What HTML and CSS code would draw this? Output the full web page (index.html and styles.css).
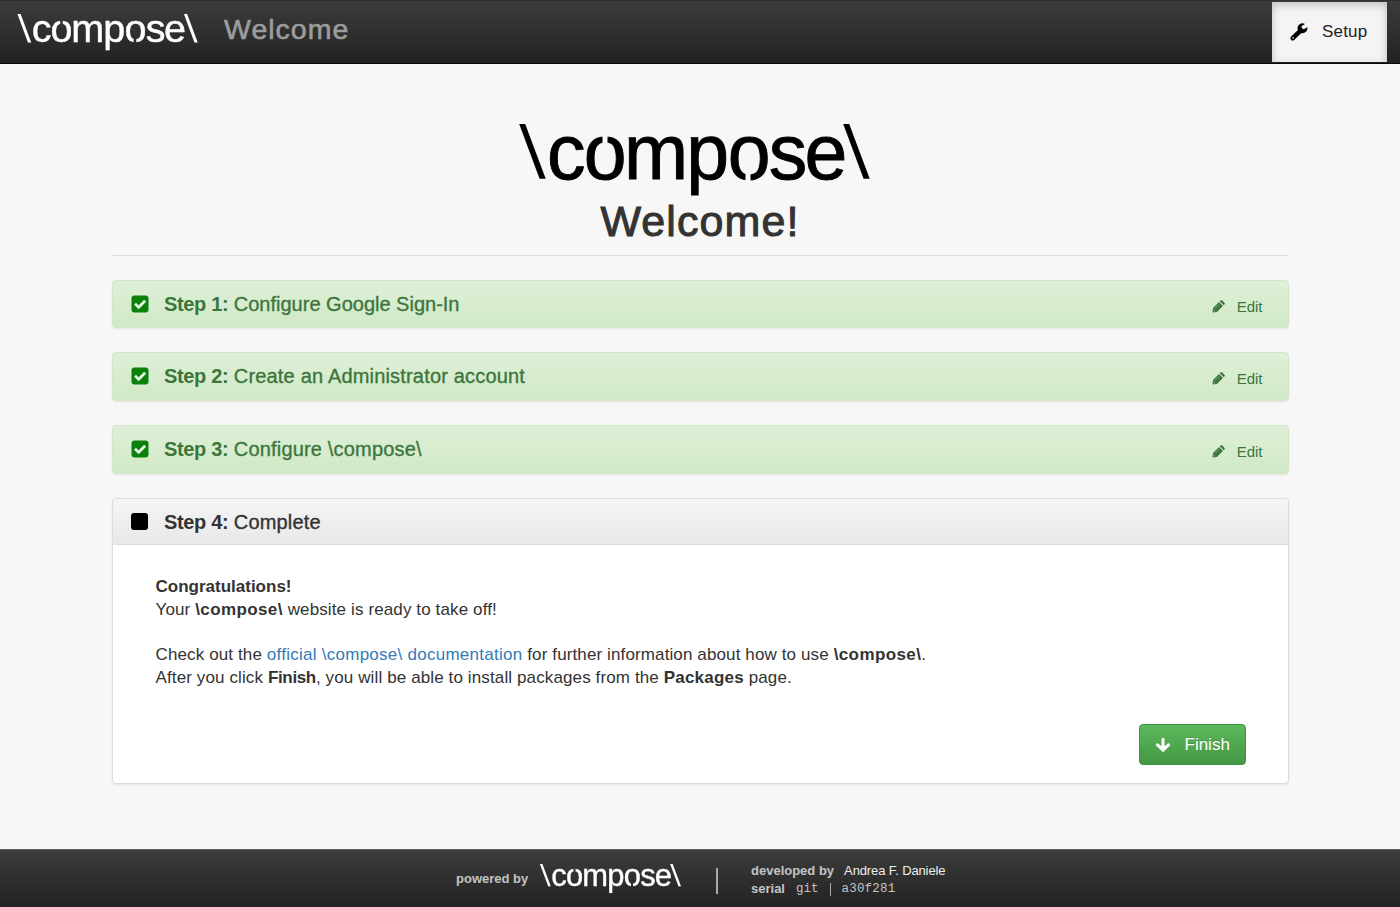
FILE: index.html
```html
<!DOCTYPE html>
<html lang="en">
<head>
<meta charset="utf-8">
<title>Welcome</title>
<link rel="stylesheet" href="styles.css">
</head>
<body>
<svg class="defs" width="0" height="0" aria-hidden="true">
  <defs>
    <mask id="gaps" maskUnits="userSpaceOnUse" x="-5" y="-5" width="370" height="90">
      <rect x="-5" y="-5" width="370" height="90" fill="#fff"/>
      <rect x="83.5" y="10" width="5" height="14" fill="#000"/>
      <rect x="226.500" y="45" width="5" height="15" fill="#000"/>
    </mask>
    <symbol id="logo" viewBox="0 0 351 72">
      <g mask="url(#gaps)" class="logo-text">
        <text transform="matrix(1 0 .09 .97 5 54)">\</text>
        <text class="word" y="55" x="28 64.800 105 167.300 208.700 249.700 285.500">compose</text>
        <text transform="matrix(1 0 .09 .97 329 54)">\</text>
      </g>
    </symbol>
    <symbol id="check" viewBox="0 0 18 18">
      <rect x=".5" y=".5" width="17" height="17" rx="3" fill="#0b800b"/>
      <path d="M4 8.800l3.600 3.500L14.200 5.800" fill="none" stroke="#e9f6e5" stroke-width="2.700"/>
    </symbol>
    <symbol id="pencil" viewBox="0 0 14 14">
      <path d="M.5 13.500l.6-4.800L7.600 2.200l4.200 4.200-6.500 6.500zM8.400 1.400l1-1q.7-.5 1.400 0l2.800 2.800q.5.700 0 1.400l-1 1z" fill="currentColor"/>
      <path d="M3.200 9l5-5" stroke="#a5caa0" stroke-width=".6"/>
      <path d="M1.800 10.800l1.500 1.500" stroke="#b5d5b0" stroke-width="1"/>
    </symbol>
  </defs>
</svg>

<header class="navbar">
  <svg class="logo nav-logo"><use href="#logo"/></svg>
  <span class="nav-title">Welcome</span>
  <a class="nav-tab">
    <svg class="wrench" viewBox="0 0 18 18"><path d="M2.800 15.200L9.500 8.700" stroke="#000" stroke-width="4.600" stroke-linecap="round"/><path d="M17.300 4.200L13.700 6.200 11.600 5 11.600 2.900 15 .900Q11.200-.800 8.700 2 6.800 4.400 8 7.200L10.700 10Q14 10.900 16.200 8.500 17.800 6.500 17.300 4.200z"/><circle cx="3.100" cy="14.900" r=".8" fill="#f5f3f5"/></svg>
    <span>Setup</span>
  </a>
</header>

<main class="container">
  <svg class="logo hero-logo"><use href="#logo"/></svg>
  <h1 class="hero-title">Welcome!</h1>
  <hr class="rule">

  <section class="panel done">
    <svg class="box"><use href="#check"/></svg>
    <h2 class="step"><b>Step 1:</b> <span>Configure Google Sign-In</span></h2>
    <a class="edit"><svg class="pencil"><use href="#pencil"/></svg><span>Edit</span></a>
  </section>
  <section class="panel done tall">
    <svg class="box"><use href="#check"/></svg>
    <h2 class="step wide"><b>Step 2:</b> <span>Create an Administrator account</span></h2>
    <a class="edit"><svg class="pencil"><use href="#pencil"/></svg><span>Edit</span></a>
  </section>
  <section class="panel done tall">
    <svg class="box"><use href="#check"/></svg>
    <h2 class="step wide"><b>Step 3:</b> <span>Configure \compose\</span></h2>
    <a class="edit"><svg class="pencil"><use href="#pencil"/></svg><span>Edit</span></a>
  </section>

  <section class="current">
    <div class="current-head">
      <span class="square"></span>
      <h2 class="step wide"><b>Step 4:</b> <span>Complete</span></h2>
    </div>
    <div class="current-body">
      <p><b>Congratulations!</b></p>
      <p>Your <b class="brand">\compose\</b> website is ready to take off!</p>
      <p class="spaced">Check out the <a class="link">official \compose\ documentation</a> for further information about how to use <b class="brand">\compose\</b>.</p>
      <p>After you click <b class="action">Finish</b>, you will be able to install packages from the <b class="page-name">Packages</b> page.</p>
      <button class="finish"><svg class="arrow" viewBox="0 0 16 16"><path d="M8 2.200v9M2.500 7.800L8 13l5.500-5.200" fill="none" stroke="#fff" stroke-width="3.100" stroke-linecap="round"/></svg><span>Finish</span></button>
    </div>
  </section>
</main>

<footer class="footer">
  <b class="powered">powered by</b>
  <svg class="logo foot-logo"><use href="#logo"/></svg>
  <span class="divider"></span>
  <div class="credits">
    <div class="credit"><b>developed by</b><span class="author">Andrea F. Daniele</span></div>
    <div class="credit"><b>serial</b><span class="mono">git</span><span class="bar"></span><span class="mono hash">a30f281</span></div>
  </div>
</footer>
</body>
</html>
```
FILE: styles.css
```css
* { box-sizing: border-box; }
body {
  margin: 0;
  height: 907px;
  overflow: hidden;
  display: flex;
  flex-direction: column;
  background: #f7f7f7;
  color: #333;
  font-family: "Liberation Sans", Arial, sans-serif;
  font-size: 17px;
}
h1, h2, p { margin: 0; }
.defs { position: absolute; }
.logo { display: block; overflow: visible; flex: none; }
.logo-text { font: 78px "Liberation Sans", Arial, sans-serif; fill: currentColor; }
.word { font-size: 77px; stroke: currentColor; stroke-width: .9px; }

.navbar {
  height: 64px;
  flex: none;
  display: flex;
  align-items: flex-start;
  padding: 1px 13px 0 17px;
  background: linear-gradient(#3c3c3c, #222);
  border-top: 1px solid #303030;
  border-bottom: 1px solid #080808;
}
.nav-logo { width: 181px; height: 37px; margin-top: 12px; color: #fff; }
.nav-title {
  margin: 11px 0 0 26px;
  font-size: 28.5px;
  line-height: 32px;
  letter-spacing: 1px;
  color: #9d9d9d;
  -webkit-text-stroke: .6px #9d9d9d;
}
.nav-tab {
  margin-left: auto;
  width: 115px;
  height: 60px;
  display: flex;
  align-items: center;
  padding: 0 0 0 18px;
  gap: 14px;
  color: #222;
  letter-spacing: .2px;
  background: #f5f3f5;
  box-shadow: inset 0 3px 9px rgba(0,0,0,.22);
}
.wrench { width: 18px; height: 18px; }

.container { width: 1177px; margin: 0 auto; flex: 1; }
.hero-logo { width: 351px; height: 72px; margin: 60px 0 0 407px; color: #000; }
.hero-title {
  margin-top: 1px;
  text-align: center;
  font-size: 43px;
  font-weight: 400;
  line-height: 48px;
  letter-spacing: 1.1px;
  -webkit-text-stroke: 1px #333;
}
.rule { margin: 10px 0 24px; border: 0; border-top: 1px solid #ddd; height: 1px; }

.panel, .current-head { display: flex; align-items: center; }
.panel {
  height: 48px;
  margin-bottom: 24px;
  border: 1px solid #d3e6c6;
  border-radius: 4px;
  padding: 0 25px 0 18px;
  color: #3c763d;
  background: linear-gradient(#dff0d8, #d0e9c6);
  box-shadow: 0 1px 2px rgba(0,0,0,.08);
}
.tall { height: 49px; padding-bottom: 2px; }
.box { width: 18px; height: 18px; }
.step {
  margin-left: 15.5px;
  font-size: 20px;
  line-height: 24px;
  font-weight: 400;
}
.step b { letter-spacing: -.35px; }
.step span { -webkit-text-stroke: .35px currentColor; }
.wide span { letter-spacing: .18px; }
.edit { margin: 4px 0 0 auto; display: flex; align-items: center; gap: 12px; font-size: 15px; }
.tall .edit { margin-top: 6px; }
.pencil { width: 13px; height: 13px; }

.current {
  height: 286px;
  border: 1px solid #ddd;
  border-radius: 4px;
  background: #fff;
  box-shadow: 0 1px 2px rgba(0,0,0,.08);
}
.current-head {
  height: 46px;
  padding-left: 18px;
  border-bottom: 1px solid #ddd;
  border-radius: 4px 4px 0 0;
  background: linear-gradient(#f5f5f5, #e8e8e8);
}
.square { width: 17px; height: 17px; margin-right: 1px; border-radius: 3px; background: #000; }
.current-body {
  padding: 30px 42px 0 43px;
  line-height: 23px;
  letter-spacing: .12px;
  display: flex;
  flex-direction: column;
}
.current-body b { letter-spacing: 0; }
.current-body .brand { letter-spacing: .4px; }
.current-body .action { letter-spacing: -.35px; }
.current-body .page-name { letter-spacing: .2px; }
.spaced { margin-top: 22px; }
.link { color: #337ab7; letter-spacing: .26px; }
.finish {
  align-self: flex-end;
  margin-top: 35px;
  width: 107px;
  height: 41px;
  display: flex;
  align-items: center;
  gap: 14px;
  padding: 0 0 0 15px;
  border: 1px solid #3e8f3e;
  border-radius: 4px;
  background: linear-gradient(#5cb85c, #449844);
  color: #fff;
  font: 17px "Liberation Sans", Arial, sans-serif;
  text-shadow: 0 -1px 0 rgba(0,0,0,.15);
}
.arrow { width: 16px; height: 16px; }

.footer {
  height: 58px;
  flex: none;
  display: flex;
  align-items: flex-start;
  padding-left: 456px;
  background: linear-gradient(#3c3c3c, #222);
  border-top: 1px solid #606060;
  color: #c4c4c4;
  font-size: 13px;
}
.powered { width: 84px; margin-top: 21px; }
.foot-logo { width: 141px; height: 29px; margin-top: 14px; color: #fff; }
.divider { width: 2px; height: 26px; margin: 18px 33px 0 35px; background: #aaa; }
.credits { padding-top: 12px; }
.credit { display: flex; align-items: center; height: 18px; line-height: 18px; }
.author { margin-left: 10px; color: #eee; letter-spacing: -.12px; }
.mono { margin-left: 11px; font: 12.5px "Liberation Mono", monospace; }
.hash { letter-spacing: .2px; }
.bar { width: 1px; height: 13px; margin-left: 11px; background: #aaa; }
```
